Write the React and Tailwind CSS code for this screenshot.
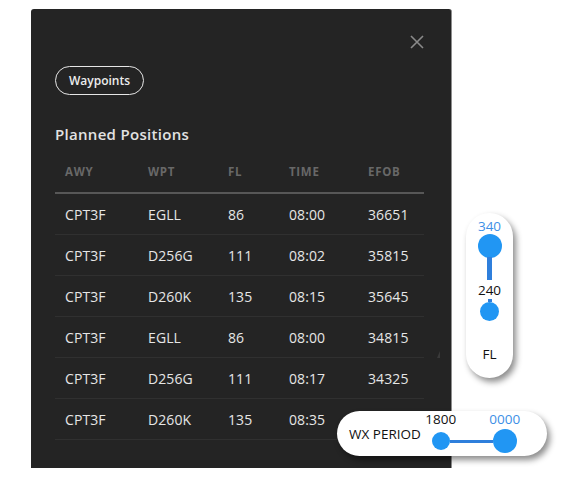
import React from "react";

const rows = [
  ["CPT3F", "EGLL", "86", "08:00", "36651"],
  ["CPT3F", "D256G", "111", "08:02", "35815"],
  ["CPT3F", "D260K", "135", "08:15", "35645"],
  ["CPT3F", "EGLL", "86", "08:00", "34815"],
  ["CPT3F", "D256G", "111", "08:17", "34325"],
  ["CPT3F", "D260K", "135", "08:35", "34155"],
];

const cols = "grid grid-cols-[83px_80px_61px_79px_1fr] pl-[10px]";

export default function App() {
  return (
    <div
      className="relative w-[576px] h-[487px] bg-white overflow-hidden"
      style={{ fontFamily: '"Open Sans", "Noto Sans", sans-serif' }}
    >
      {/* main panel */}
      <div className="relative ml-[31px] mt-[9px] w-[421px] h-[459px] bg-[#242424] rounded-t-[3px] border-r border-[#8e8e8e] pl-[24px] pr-[27px] pt-[26px]">
        <div className="flex justify-end">
          <svg width="14" height="14" viewBox="0 0 14 14">
            <path d="M1 1L13 13M13 1L1 13" stroke="#8a8a8a" strokeWidth="1.6" />
          </svg>
        </div>

        <button className="mt-[17px] h-[29px] w-[89px] rounded-full border border-[#e6e6e6] text-[12px] font-semibold text-[#ececec]">
          Waypoints
        </button>

        <h2 className="mt-[29px] text-[15px] leading-[20px] font-semibold text-[#e2e2e2] tracking-[0.3px]">
          Planned Positions
        </h2>

        <div className="mt-[8px]">
          <div className={`${cols} h-[42px] items-center border-b-2 border-[#575757] text-[11.5px] font-bold tracking-[0.7px] text-[#686868]`}>
            <span>AWY</span>
            <span>WPT</span>
            <span>FL</span>
            <span>TIME</span>
            <span>EFOB</span>
          </div>
          {rows.map((r, i) => (
            <div
              key={i}
              className={`${cols} h-[41px] items-center border-b border-[#303030] text-[14px] tracking-[0.1px] text-[#e6e6e6]`}
            >
              {r.map((c, j) => (
                <span key={j}>{c}</span>
              ))}
            </div>
          ))}
        </div>

        {/* scrollbar nub */}
        <div className="absolute left-[406px] top-[342px] w-0 h-0 border-l-[3px] border-r-[0px] border-b-[7px] border-l-transparent border-b-[#3a3a3a]" />
      </div>

      {/* FL vertical slider */}
      <div className="absolute left-[466px] top-[213px] w-[47px] h-[165px] rounded-full bg-white shadow-[3px_4px_6px_rgba(0,0,0,0.45)] flex flex-col items-center pt-[5px]">
        <span className="text-[13.5px] leading-[16px] text-[#3d8fe6]">340</span>
        <div className="w-[24px] h-[24px] rounded-full bg-[#2196f3]" />
        <div className="-mt-[1px] w-[5px] h-[23px] bg-[#2f7fdc]" />
        <span className="mt-[2px] text-[13.5px] leading-[16px] text-[#111]">240</span>
        <div className="mt-[1px] w-[4px] h-[3px] bg-[#2f7fdc]" />
        <div className="w-[19px] h-[19px] rounded-full bg-[#2196f3]" />
        <span className="mt-[25px] text-[13.5px] leading-[16px] text-[#111]">FL</span>
      </div>

      {/* WX period horizontal slider */}
      <div className="absolute left-[337px] top-[411px] w-[210px] h-[45px] rounded-full bg-white shadow-[3px_4px_6px_rgba(0,0,0,0.45)] flex items-start pl-[12px]">
        <span className="mt-[15px] text-[13.5px] leading-[16px] text-[#111] whitespace-nowrap">WX PERIOD</span>
        <div className="ml-[2px] flex flex-col">
          <div className="flex gap-[28px] text-[13.5px] leading-[16px]">
            <span className="w-[36px] text-center text-[#111]">1800</span>
            <span className="w-[36px] text-center text-[#3d8fe6]">0000</span>
          </div>
          <div className="mt-[2px] flex items-center pl-[9px]">
            <div className="w-[18px] h-[18px] rounded-full bg-[#2196f3]" />
            <div className="w-[43px] h-[3px] bg-[#2f7fdc]" />
            <div className="w-[24px] h-[24px] rounded-full bg-[#2196f3]" />
          </div>
        </div>
      </div>
    </div>
  );
}
